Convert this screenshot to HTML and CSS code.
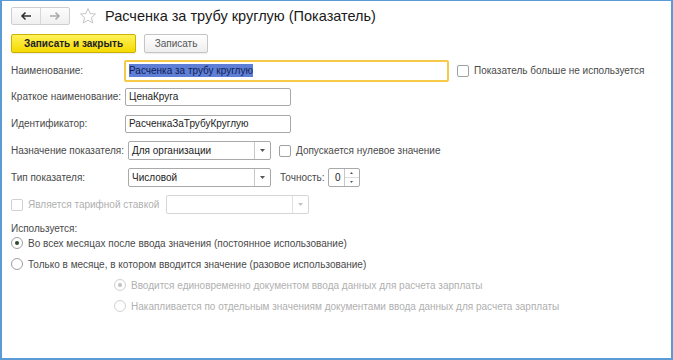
FILE: index.html
```html
<html>
<head>
	<title>Расченка за трубу круглую (Показатель)</title>
	<link rel="stylesheet" href="styles.css">
</head>
<body>

<div class="window">

	<div class="head">
		<div class="nav">
			<span class="nav-btn"><svg width="12" height="10" viewBox="0 0 12 10"><path d="M11 5H2M5.5 1.5L2 5l3.5 3.5" fill="none" stroke="#333" stroke-width="1.6"/></svg></span>
			<span class="nav-btn"><svg width="12" height="10" viewBox="0 0 12 10"><path d="M1 5h9M6.5 1.5L10 5 6.5 8.5" fill="none" stroke="#aaa" stroke-width="1.6"/></svg></span>
		</div>
		<svg class="star" width="18" height="18" viewBox="0 0 18 18"><path d="M9 1.5l2.2 5 5.3.5-4 3.6 1.2 5.3L9 13.2l-4.7 2.7 1.2-5.3-4-3.6 5.3-.5z" fill="none" stroke="#c4c4c4" stroke-width="1"/></svg>
		<h1 class="title">Расченка за трубу круглую (Показатель)</h1>
	</div>

	<div class="cmd">
		<button class="btn btn-main">Записать и закрыть</button>
		<button class="btn">Записать</button>
	</div>

	<div class="row row-first">
		<label class="lbl">Наименование:</label>
		<div class="field field-focus"><span class="sel">Расченка за трубу круглую</span></div>
		<span class="check"><i class="box"></i>Показатель больше не используется</span>
	</div>

	<div class="row">
		<label class="lbl">Краткое наименование:</label>
		<div class="field field-short">ЦенаКруга</div>
	</div>

	<div class="row">
		<label class="lbl">Идентификатор:</label>
		<div class="field field-short">РасченкаЗаТрубуКруглую</div>
	</div>

	<div class="row">
		<label class="lbl">Назначение показателя:</label>
		<div class="combo"><span class="combo-text">Для организации</span><span class="combo-btn"><svg width="5" height="3" viewBox="0 0 5 3"><path d="M0 0h5L2.5 3z" fill="#555"/></svg></span></div>
		<span class="check"><i class="box"></i>Допускается нулевое значение</span>
	</div>

	<div class="row">
		<label class="lbl">Тип показателя:</label>
		<div class="combo"><span class="combo-text">Числовой</span><span class="combo-btn"><svg width="5" height="3" viewBox="0 0 5 3"><path d="M0 0h5L2.5 3z" fill="#555"/></svg></span></div>
		<span class="lbl-inline">Точность:</span>
		<div class="spin"><span class="spin-val">0</span><span class="spin-btns"><i><svg width="3" height="2" viewBox="0 0 3 2"><path d="M0 2h3L1.5 0z" fill="#555"/></svg></i><i><svg width="3" height="2" viewBox="0 0 3 2"><path d="M0 0h3L1.5 2z" fill="#555"/></svg></i></span></div>
	</div>

	<div class="row disabled">
		<span class="check check-tariff"><i class="box"></i>Является тарифной ставкой</span>
		<div class="combo combo-off"><span class="combo-text"></span><span class="combo-btn"><svg width="5" height="3" viewBox="0 0 5 3"><path d="M0 0h5L2.5 3z" fill="#c4c4c4"/></svg></span></div>
	</div>

	<div class="legend">Используется:</div>

	<div class="radio"><i class="dot on"></i>Во всех месяцах после ввода значения (постоянное использование)</div>
	<div class="radio"><i class="dot"></i>Только в месяце, в котором вводится значение (разовое использование)</div>
	<div class="radio sub disabled"><i class="dot on"></i>Вводится единовременно документом ввода данных для расчета зарплаты</div>
	<div class="radio sub disabled"><i class="dot"></i>Накапливается по отдельным значениям документами ввода данных для расчета зарплаты</div>

</div>

</body>
</html>
```

FILE: styles.css
```css
body{
	margin:0;
	background:#fff;
	font-family:"Liberation Sans", Arial, sans-serif;
	font-size:10px;
	color:#4a4a4a;
}
.window{
	width:673px;
	height:360px;
	box-sizing:border-box;
	border:2px solid #5b9bd5;
	border-top-width:1px;
	padding:0 9px;
}

/* header */
.head{
	display:flex;
	align-items:center;
	margin-top:6px;
	height:18px;
}
.nav{
	display:flex;
	border:1px solid #cfcfcf;
	border-radius:2px;
	background:linear-gradient(#fdfdfd,#efefef);
	height:16px;
}
.nav-btn{
	width:28px;
	display:flex;
	align-items:center;
	justify-content:center;
}
.nav-btn + .nav-btn{
	border-left:1px solid #d8d8d8;
}
.star{
	margin-left:9px;
}
.title{
	margin:0 0 0 8px;
	font-size:14.5px;
	font-weight:normal;
	color:#1a1a1a;
}

/* commands */
.cmd{
	display:flex;
	margin-top:9px;
	height:19px;
	gap:8px;
}
.btn{
	font-family:"Liberation Sans", Arial, sans-serif;
	font-size:10px;
	height:19px;
	padding:0 8px;
	border:1px solid #c5c5c5;
	border-radius:2px;
	background:linear-gradient(#ffffff,#eeeeee);
	color:#555;
	box-shadow:0 1px 1px rgba(0,0,0,.08);
}
.btn-main{
	width:125px;
	font-weight:bold;
	color:#222;
	border-color:#c9b200;
	background:linear-gradient(#fff25a,#f5d900);
}
.btn + .btn{
	width:64px;
}

/* form rows */
.row{
	display:flex;
	align-items:center;
	height:27px;
}
.row-first{
	margin-top:5px;
	height:25px;
}
.lbl{
	width:113px;
	flex:none;
}
.field{
	box-sizing:border-box;
	height:18px;
	line-height:16px;
	border:1px solid #a9a9a9;
	border-radius:2px;
	padding:0 3px;
	color:#222;
	white-space:nowrap;
}
.field-focus{
	width:325px;
	height:22px;
	line-height:18px;
	border:2px solid #f7c948;
	padding:0 3px;
}
.field-short{
	width:166px;
	margin-left:1px;
}
.sel{
	background:#5f7fd6;
	color:#0f1e55;
	padding:1px 0;
}
.check{
	display:flex;
	align-items:center;
	margin-left:8px;
}
.box{
	box-sizing:border-box;
	width:12px;
	height:12px;
	border:1px solid #a0a0a0;
	border-radius:2px;
	margin-right:5px;
	background:#fff;
}

/* combo */
.combo{
	box-sizing:border-box;
	display:flex;
	width:143px;
	height:19px;
	margin-left:4px;
	border:1px solid #a9a9a9;
	border-radius:2px;
	color:#222;
}
.combo-text{
	flex:1;
	line-height:17px;
	padding-left:3px;
}
.combo-btn{
	width:15px;
	border-left:1px solid #c8c8c8;
	display:flex;
	align-items:center;
	justify-content:center;
}
.lbl-inline{
	margin-left:9px;
}
.spin{
	box-sizing:border-box;
	display:flex;
	width:32px;
	height:19px;
	margin-left:3px;
	border:1px solid #a9a9a9;
	border-radius:2px;
	color:#222;
}
.spin-val{
	flex:1;
	line-height:17px;
	text-align:right;
	padding-right:3px;
}
.spin-btns{
	width:14px;
	border-left:1px solid #c8c8c8;
	display:flex;
	flex-direction:column;
}
.spin-btns i{
	flex:1;
	display:flex;
	align-items:center;
	justify-content:center;
}
.spin-btns i + i{
	border-top:1px solid #dcdcdc;
}

/* disabled */
.disabled{
	color:#b0b0b0;
}
.disabled .box, .disabled .dot{
	border-color:#d0d0d0;
}
.check-tariff{
	margin-left:0;
	width:155px;
}
.combo-off{
	margin-left:0;
	border-color:#d5d5d5;
}
.combo-off .combo-btn{
	border-left-color:#e0e0e0;
}

/* radio group */
.legend{
	margin-top:4px;
	height:14px;
	line-height:14px;
}
.radio{
	display:flex;
	align-items:center;
	height:14px;
	margin-top:7px;
}
.legend + .radio{
	margin-top:0;
}
.sub{
	margin-left:103px;
}
.dot{
	box-sizing:border-box;
	width:12px;
	height:12px;
	border:1px solid #a0a0a0;
	border-radius:50%;
	margin-right:5px;
	display:flex;
	align-items:center;
	justify-content:center;
}
.dot.on::after{
	content:"";
	width:4px;
	height:4px;
	border-radius:50%;
	background:#2e4a2e;
}
.disabled .dot.on::after{
	background:#c0c0c0;
}
```
